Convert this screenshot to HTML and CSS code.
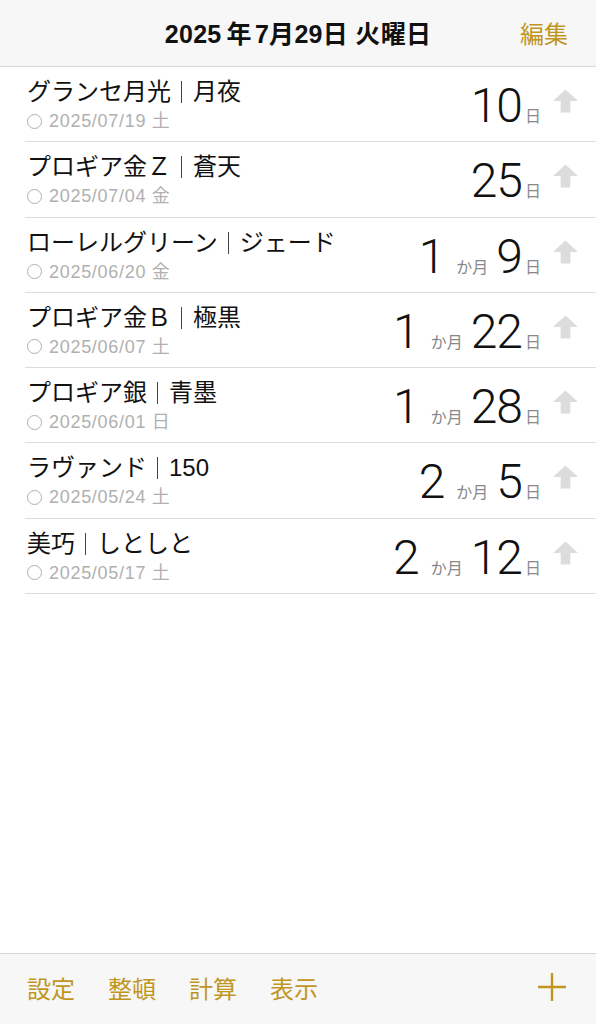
FILE: index.html
```html
<!DOCTYPE html>
<html lang="ja">
<head>
    <meta charset="UTF-8">
    <meta name="viewport" content="width=device-width, initial-scale=1.0">
    <title>日数リスト</title>
    <link rel="stylesheet" href="styles.css">
</head>
<body>
    <div class="app">
        <header class="topbar">
            <h1>2025<span class="kj">年</span>7月29日 火曜日</h1>
            <span class="edit">編集</span>
        </header>

        <ul class="list">
            <li class="row">
                <div class="info">
                    <div class="name">グランセ月光<span class="sep"></span>月夜</div>
                    <div class="date"><span class="ring"></span>2025/07/19 土</div>
                </div>
                <div class="count"><span class="num">10</span><span class="unit">日</span></div>
                <svg class="arrow" viewBox="0 0 26 24"><path d="M13 0 L26 12 L18 12 L18 24 L8 24 L8 12 L0 12 Z"/></svg>
            </li>
            <li class="row">
                <div class="info">
                    <div class="name">プロギア金Ｚ<span class="sep"></span>蒼天</div>
                    <div class="date"><span class="ring"></span>2025/07/04 金</div>
                </div>
                <div class="count"><span class="num">25</span><span class="unit">日</span></div>
                <svg class="arrow" viewBox="0 0 26 24"><path d="M13 0 L26 12 L18 12 L18 24 L8 24 L8 12 L0 12 Z"/></svg>
            </li>
            <li class="row">
                <div class="info">
                    <div class="name">ローレルグリーン<span class="sep"></span>ジェード</div>
                    <div class="date"><span class="ring"></span>2025/06/20 金</div>
                </div>
                <div class="count"><span class="num">1</span><span class="unit mon">か月</span><span class="num">9</span><span class="unit">日</span></div>
                <svg class="arrow" viewBox="0 0 26 24"><path d="M13 0 L26 12 L18 12 L18 24 L8 24 L8 12 L0 12 Z"/></svg>
            </li>
            <li class="row">
                <div class="info">
                    <div class="name">プロギア金Ｂ<span class="sep"></span>極黒</div>
                    <div class="date"><span class="ring"></span>2025/06/07 土</div>
                </div>
                <div class="count"><span class="num">1</span><span class="unit mon">か月</span><span class="num">22</span><span class="unit">日</span></div>
                <svg class="arrow" viewBox="0 0 26 24"><path d="M13 0 L26 12 L18 12 L18 24 L8 24 L8 12 L0 12 Z"/></svg>
            </li>
            <li class="row">
                <div class="info">
                    <div class="name">プロギア銀<span class="sep"></span>青墨</div>
                    <div class="date"><span class="ring"></span>2025/06/01 日</div>
                </div>
                <div class="count"><span class="num">1</span><span class="unit mon">か月</span><span class="num">28</span><span class="unit">日</span></div>
                <svg class="arrow" viewBox="0 0 26 24"><path d="M13 0 L26 12 L18 12 L18 24 L8 24 L8 12 L0 12 Z"/></svg>
            </li>
            <li class="row">
                <div class="info">
                    <div class="name">ラヴァンド<span class="sep"></span>150</div>
                    <div class="date"><span class="ring"></span>2025/05/24 土</div>
                </div>
                <div class="count"><span class="num">2</span><span class="unit mon">か月</span><span class="num">5</span><span class="unit">日</span></div>
                <svg class="arrow" viewBox="0 0 26 24"><path d="M13 0 L26 12 L18 12 L18 24 L8 24 L8 12 L0 12 Z"/></svg>
            </li>
            <li class="row">
                <div class="info">
                    <div class="name">美巧<span class="sep"></span>しとしと</div>
                    <div class="date"><span class="ring"></span>2025/05/17 土</div>
                </div>
                <div class="count"><span class="num">2</span><span class="unit mon">か月</span><span class="num">12</span><span class="unit">日</span></div>
                <svg class="arrow" viewBox="0 0 26 24"><path d="M13 0 L26 12 L18 12 L18 24 L8 24 L8 12 L0 12 Z"/></svg>
            </li>
        </ul>

        <footer class="toolbar">
            <span class="tool">設定</span>
            <span class="tool">整頓</span>
            <span class="tool">計算</span>
            <span class="tool">表示</span>
            <svg class="plus" viewBox="0 0 28 28"><path d="M14 0 V28 M0 14 H28"/></svg>
        </footer>
    </div>
</body>
</html>
```

FILE: styles.css
```css
* { box-sizing: border-box; }
body { margin: 0; background: #fff; font-family: "Liberation Sans", "Noto Sans CJK JP", sans-serif; color: #111; }
.app { width: 596px; height: 1024px; display: flex; flex-direction: column; }

.topbar { height: 67px; background: #f7f7f7; border-bottom: 1px solid #d9d9d9; display: flex; align-items: center; justify-content: center; position: relative; }
.topbar h1 { margin: 0 0 3px; font-size: 25px; font-weight: 700; letter-spacing: 0.3px; }
.topbar .kj { margin: 0 3px 0 5px; }
.edit { position: absolute; right: 28px; top: 15px; font-size: 24px; color: #c0961f; }

.list { list-style: none; margin: 0; padding: 0; flex: 1; }
.row { margin-left: 25px; height: 75.3px; border-bottom: 1px solid #dcdcdc; display: flex; align-items: flex-start; padding: 0 18px 0 2px; }
.info { flex: 1; padding-top: 9px; }
.name { font-size: 24px; line-height: 32px; color: #111; display: flex; align-items: center; }
.sep { display: inline-block; width: 1px; height: 22px; background: #444; margin: 0 11px 0 10px; }
.date { font-size: 18px; line-height: 22px; color: #b0b0b0; display: flex; align-items: center; margin-top: 2px; letter-spacing: 0.7px; }
.ring { display: inline-block; width: 15px; height: 15px; border: 1.4px solid #b0b0b0; border-radius: 50%; margin-right: 7px; }

.count { display: flex; align-items: baseline; padding-top: 13px; }
.num { font-family: Roboto, sans-serif; font-weight: 300; font-size: 48px; line-height: 52px; color: #111; letter-spacing: -1px; }
.unit { font-family: "Noto Sans CJK JP", sans-serif; font-size: 16px; color: #888; margin-left: 3px; }
.unit.mon { margin: 0 8px 0 12px; }
.arrow { width: 25px; height: 24px; fill: #dcdcdc; margin: 22px 0 0 12px; }

.toolbar { height: 71px; background: #f7f7f7; border-top: 1px solid #d4d4d4; display: flex; align-items: center; padding: 0 30px 4px 27px; gap: 33px; }
.tool { font-size: 24px; color: #c0961f; }
.plus { width: 28px; height: 28px; margin-left: auto; stroke: #c0961f; stroke-width: 2.4; fill: none; }
```
